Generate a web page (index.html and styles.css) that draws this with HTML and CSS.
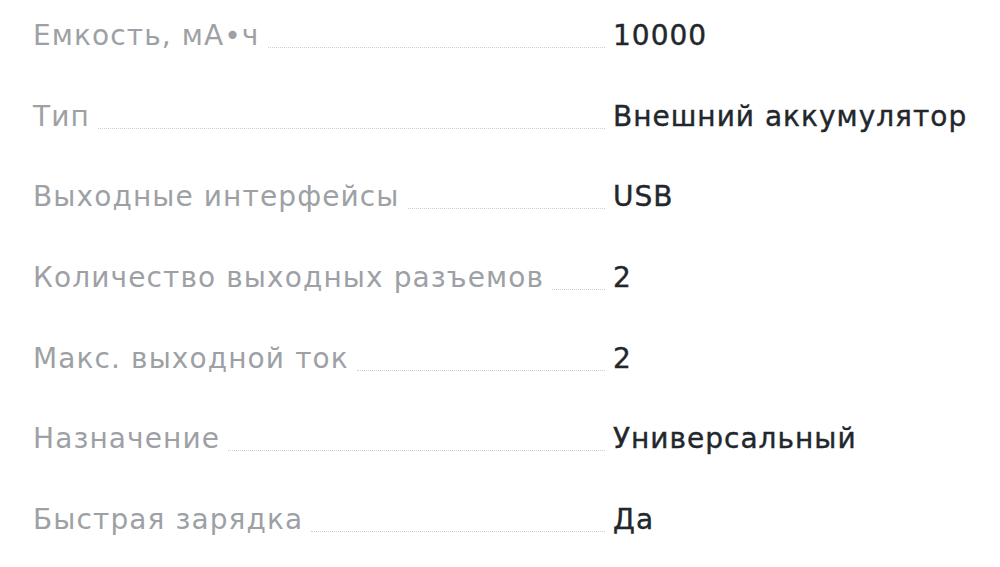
FILE: index.html
```html
<!DOCTYPE html>
<html lang="ru">
<head>
<meta charset="utf-8">
<link rel="stylesheet" href="styles.css">
</head>
<body>
<dl class="specs">
  <div class="row"><dt class="label"><span class="name">Емкость, мА•ч</span><span class="dots"></span></dt><dd class="value">10000</dd></div>
  <div class="row"><dt class="label"><span class="name">Тип</span><span class="dots"></span></dt><dd class="value">Внешний аккумулятор</dd></div>
  <div class="row"><dt class="label"><span class="name">Выходные интерфейсы</span><span class="dots"></span></dt><dd class="value">USB</dd></div>
  <div class="row"><dt class="label"><span class="name">Количество выходных разъемов</span><span class="dots"></span></dt><dd class="value">2</dd></div>
  <div class="row"><dt class="label"><span class="name">Макс. выходной ток</span><span class="dots"></span></dt><dd class="value">2</dd></div>
  <div class="row"><dt class="label"><span class="name">Назначение</span><span class="dots"></span></dt><dd class="value">Универсальный</dd></div>
  <div class="row"><dt class="label"><span class="name">Быстрая зарядка</span><span class="dots"></span></dt><dd class="value">Да</dd></div>
</dl>
</body>
</html>
```
FILE: styles.css
```css
html, body {
  margin: 0;
  padding: 0;
  background: #ffffff;
}
.specs {
  margin: 0;
  padding: 21px 0 0 33px;
  display: flex;
  flex-direction: column;
  gap: 50.7px;
  font-family: "DejaVu Sans", "Noto Sans", sans-serif;
  font-size: 28px;
  line-height: 30px;
}
.row {
  display: flex;
  align-items: baseline;
}
.label {
  width: 572px;
  display: flex;
  align-items: baseline;
  margin: 0;
}
.name {
  color: #9da1a5;
  white-space: nowrap;
  letter-spacing: 1.1px;
}
.dots {
  flex: 1;
  margin-left: 8px;
  border-bottom: 1px dotted #cdd0d2;
  position: relative;
  top: 3px;
}
.value {
  margin: 0 0 0 8px;
  color: #22272c;
  white-space: nowrap;
  letter-spacing: 1px;
  -webkit-text-stroke: 0.4px #22272c;
}
```
